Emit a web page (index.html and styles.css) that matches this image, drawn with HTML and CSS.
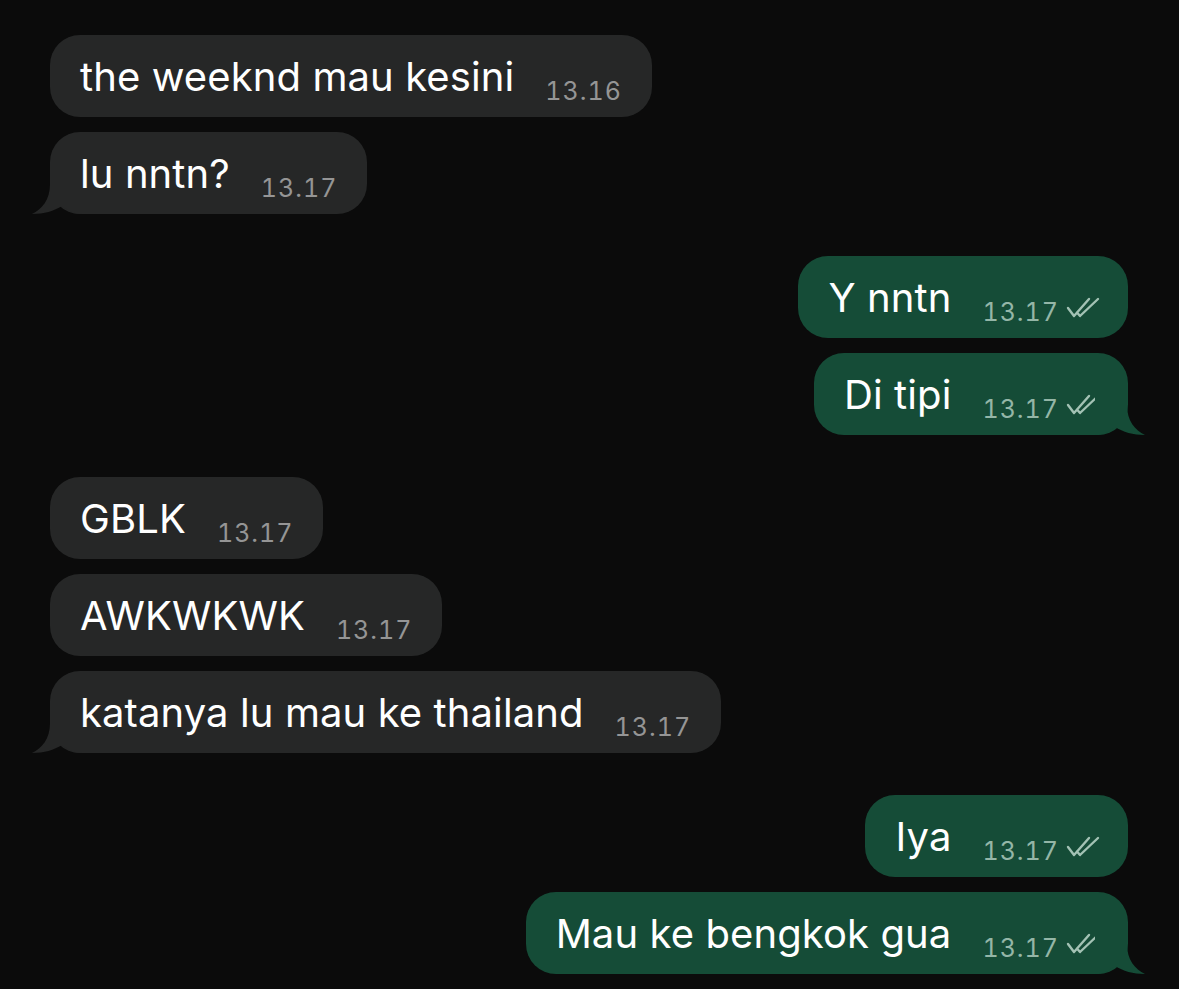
FILE: index.html
```html
<!DOCTYPE html>
<html>
<head>
<meta charset="utf-8">
<link rel="stylesheet" href="styles.css">
</head>
<body>
<div class="chat">
  <div class="group in">
    <div class="bubble"><span class="text">the weeknd mau kesini</span><span class="time">13.16</span></div>
    <div class="bubble tail"><span class="text">lu nntn?</span><span class="time">13.17</span>
      <svg class="tailsvg" viewBox="0 0 52 50" width="52" height="50"><path d="M20 0 L20 20 C20 36 12 45 2 50 C14 50 24 47 32 42 C38 47 44 50 52 50 L52 0 Z"/></svg>
    </div>
  </div>
  <div class="group out">
    <div class="bubble"><span class="text">Y nntn</span><span class="time">13.17</span><svg class="check" viewBox="0 0 34 22" width="34" height="22"><path d="M2 11 L8 19 L23 2 M11 15.5 L14 19 L32 2"/></svg></div>
    <div class="bubble tail"><span class="text">Di tipi</span><span class="time">13.17</span><svg class="check" viewBox="0 0 34 22" width="34" height="22"><path d="M2 11 L8 19 L23 2 M11 15.5 L14 19 L32 2"/></svg>
      <svg class="tailsvg" viewBox="0 0 52 50" width="52" height="50"><path d="M20 0 L20 20 C20 36 12 45 2 50 C14 50 24 47 32 42 C38 47 44 50 52 50 L52 0 Z"/></svg>
    </div>
  </div>
  <div class="group in">
    <div class="bubble"><span class="text">GBLK</span><span class="time">13.17</span></div>
    <div class="bubble"><span class="text">AWKWKWK</span><span class="time">13.17</span></div>
    <div class="bubble tail"><span class="text">katanya lu mau ke thailand</span><span class="time">13.17</span>
      <svg class="tailsvg" viewBox="0 0 52 50" width="52" height="50"><path d="M20 0 L20 20 C20 36 12 45 2 50 C14 50 24 47 32 42 C38 47 44 50 52 50 L52 0 Z"/></svg>
    </div>
  </div>
  <div class="group out">
    <div class="bubble"><span class="text">Iya</span><span class="time">13.17</span><svg class="check" viewBox="0 0 34 22" width="34" height="22"><path d="M2 11 L8 19 L23 2 M11 15.5 L14 19 L32 2"/></svg></div>
    <div class="bubble tail"><span class="text">Mau ke bengkok gua</span><span class="time">13.17</span><svg class="check" viewBox="0 0 34 22" width="34" height="22"><path d="M2 11 L8 19 L23 2 M11 15.5 L14 19 L32 2"/></svg>
      <svg class="tailsvg" viewBox="0 0 52 50" width="52" height="50"><path d="M20 0 L20 20 C20 36 12 45 2 50 C14 50 24 47 32 42 C38 47 44 50 52 50 L52 0 Z"/></svg>
    </div>
  </div>
</div>
</body>
</html>
```
FILE: styles.css
```css
html, body {
  margin: 0;
  padding: 0;
  background: #0b0b0b;
  height: 100%;
}
.chat {
  display: flex;
  flex-direction: column;
  gap: 42px;
  padding: 35px 51px 0 50px;
  font-family: Inter, "Noto Sans", sans-serif;
  color: #ffffff;
}
.group {
  display: flex;
  flex-direction: column;
  gap: 15px;
}
.group.in { align-items: flex-start; }
.group.out { align-items: flex-end; }
.bubble {
  position: relative;
  box-sizing: border-box;
  height: 82px;
  border-radius: 30px;
  display: flex;
  align-items: baseline;
  padding: 22px 30px 0 30px;
}
.in .bubble { background: #262727; }
.out .bubble { background: #154c37; padding-right: 28px; }
.text {
  font-size: 40px;
  line-height: 40px;
  letter-spacing: 0.1px;
}
.time {
  font-size: 25px;
  line-height: 25px;
  margin-left: 31px;
  position: relative;
  top: 9px;
  color: #959595;
  font-variant-numeric: tabular-nums;
  letter-spacing: 1px;
}
.out .time { color: #94b6a7; }
.check {
  align-self: center;
  margin-left: 7px;
  margin-top: 0;
  fill: none;
  stroke: #a3c2b4;
  stroke-width: 2.4;
  stroke-linecap: round;
  stroke-linejoin: round;
}
.tailsvg {
  position: absolute;
  bottom: 0;
  left: -20px;
}
.in .tailsvg { fill: #262727; }
.out .tailsvg {
  fill: #154c37;
  left: auto;
  right: -19px;
  transform: scaleX(-1);
}
```
